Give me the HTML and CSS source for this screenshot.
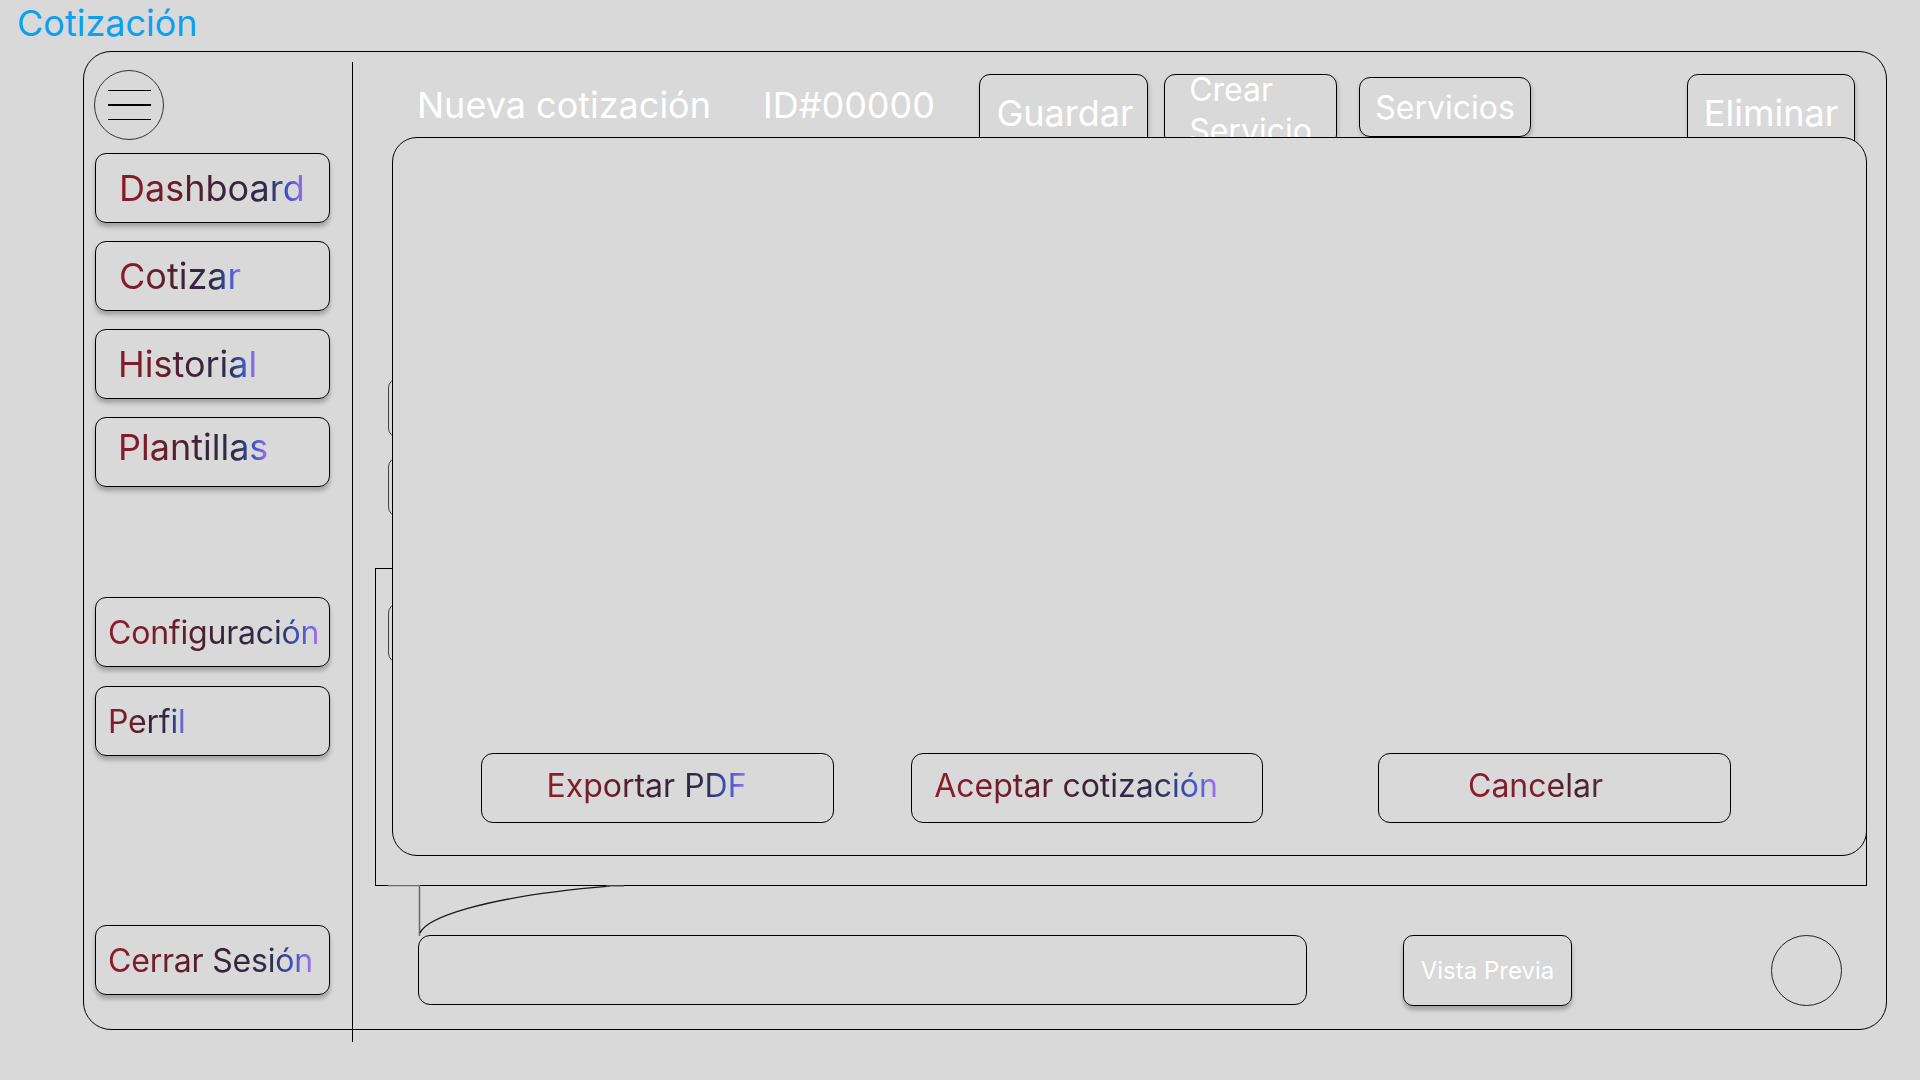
FILE: index.html
```html
<!DOCTYPE html>
<html lang="es">
<head>
<meta charset="utf-8">
<title>Cotización</title>
<link rel="stylesheet" href="styles.css">
</head>
<body>
<h1 class="page-title">Cotización</h1>
<div class="frame">
  <aside class="sidebar">
    <div class="menu-btn"><span></span><span></span><span></span></div>
    <nav class="nav-main">
      <div class="nav-item"><span class="grad">Dashboard</span></div>
      <div class="nav-item"><span class="grad">Cotizar</span></div>
      <div class="nav-item nav-tight"><span class="grad">Historial</span></div>
      <div class="nav-item nav-tight nav-raised"><span class="grad">Plantillas</span></div>
    </nav>
    <nav class="nav-secondary">
      <div class="nav-item nav-small"><span class="grad">Configuración</span></div>
      <div class="nav-item nav-small"><span class="grad">Perfil</span></div>
    </nav>
    <div class="nav-item nav-small nav-logout"><span class="grad">Cerrar Sesión</span></div>
  </aside>
  <main class="main">
    <header class="header">
      <span class="head-text title">Nueva cotización</span>
      <span class="head-text quote-id">ID#00000</span>
      <div class="tab tab-guardar">Guardar</div>
      <div class="tab tab-crear"><span class="tab-two">Crear<br>Servicio</span></div>
      <div class="tab tab-servicios">Servicios</div>
      <div class="tab tab-eliminar">Eliminar</div>
    </header>
    <section class="workspace">
      <div class="backdrop"></div>
      <div class="peek peek-1"></div>
      <div class="peek peek-2"></div>
      <div class="peek peek-3"></div>
      <div class="panel">
        <div class="action action-export"><span class="grad">Exportar PDF</span></div>
        <div class="action action-accept"><span class="grad">Aceptar cotización</span></div>
        <div class="action action-cancel"><span class="grad grad-red">Cancelar</span></div>
      </div>
    </section>
    <footer class="bottom-bar">
      <svg class="connector" width="240" height="54" viewBox="0 0 240 54">
        <path d="M0 0.5 H31.5 M31.5 0 V51" stroke="#6a6a6a" stroke-width="1.5" fill="none"/>
        <path d="M32 48 C38 34 90 12 222 1.2" stroke="#1a1a1a" stroke-width="1.3" fill="none"/>
        <path d="M218 1 H236" stroke="#6a6a6a" stroke-width="1.3" fill="none"/>
      </svg>
      <div class="input-box"></div>
      <div class="preview-btn">Vista Previa</div>
      <div class="avatar"></div>
    </footer>
  </main>
</div>
</body>
</html>
```
FILE: styles.css
```css
* { box-sizing: border-box; }

body {
  margin: 0;
  width: 1920px;
  height: 1080px;
  overflow: hidden;
  background: #d9d9d9;
  font-family: Inter, "Noto Sans", sans-serif;
}

.page-title {
  margin: 0;
  height: 45px;
  padding: 1px 0 0 17px;
  font-size: 36px;
  line-height: 44px;
  font-weight: 400;
  color: #0ba0f2;
}

.frame {
  margin: 6px 0 0 83px;
  width: 1804px;
  height: 979px;
  border: 1px solid #000;
  border-radius: 28px;
  display: flex;
  align-items: flex-start;
}

/* Sidebar */
.sidebar {
  flex: none;
  width: 269px;
  height: 980px;
  margin-top: 10px;
  border-right: 1px solid #000;
  padding: 8px 0 0 11px;
  display: flex;
  flex-direction: column;
  align-items: flex-start;
}

.menu-btn {
  width: 70px;
  height: 70px;
  margin-left: -1px;
  border: 1px solid #333;
  border-radius: 50%;
  display: flex;
  flex-direction: column;
  align-items: center;
  justify-content: center;
  gap: 13px;
}
.menu-btn span {
  display: block;
  width: 43px;
  height: 1.5px;
  background: #000;
}

.nav-main {
  margin-top: 13px;
  display: flex;
  flex-direction: column;
  gap: 18px;
}
.nav-secondary {
  margin-top: 110px;
  display: flex;
  flex-direction: column;
  gap: 19px;
}
.nav-logout { margin-top: 169px; }

.nav-item {
  width: 235px;
  height: 70px;
  border: 1px solid #000;
  border-radius: 11px;
  box-shadow: 0 4px 4px rgba(0, 0, 0, 0.25);
  display: flex;
  align-items: center;
  padding-left: 23px;
  font-size: 36px;
}
.nav-tight { padding-left: 22px; }
.nav-raised { padding-bottom: 10px; }
.nav-small {
  padding-left: 12px;
  font-size: 32px;
  letter-spacing: -0.2px;
}

.grad {
  display: inline-block;
  background: linear-gradient(90deg, #8e1b2c 0%, #6a1d2a 30%, #3a2238 55%, #2c2e4e 80%, #3e56c8 91%, #a373f2 100%);
  -webkit-background-clip: text;
  background-clip: text;
  color: transparent;
}
.grad-red {
  background: linear-gradient(90deg, #8e1b2c 0%, #7a1e2c 50%, #4a2030 80%, #5a2a3a 100%);
  -webkit-background-clip: text;
  background-clip: text;
}

/* Main column */
.main {
  flex: 1;
  display: flex;
  flex-direction: column;
}

.header {
  height: 85px;
  display: flex;
  align-items: flex-start;
  padding-left: 64px;
}

.head-text {
  margin-top: 31px;
  font-size: 36px;
  line-height: 44px;
  color: #fff;
  white-space: nowrap;
}
.title { width: 346px; flex: none; }
.quote-id { width: 216px; flex: none; }

.tab {
  flex: none;
  margin-top: 22px;
  height: 78px;
  border: 1px solid #000;
  border-radius: 11px;
  box-shadow: 1px 3px 4px rgba(0, 0, 0, 0.2);
  display: flex;
  align-items: center;
  justify-content: center;
  color: #fff;
  font-size: 36px;
}
.tab-guardar { width: 169px; padding-left: 3px; }
.tab-crear {
  width: 173px;
  height: 72px;
  margin-left: 16px;
  font-size: 32px;
  line-height: 41px;
}
.tab-two { display: inline-block; text-align: left; }
.tab-servicios {
  width: 172px;
  margin-left: 22px;
  margin-top: 25px;
  height: 60px;
  font-size: 32px;
}
.tab-eliminar { width: 168px; margin-left: 156px; }

/* Workspace */
.workspace {
  position: relative;
  margin-left: 39px;
  width: 1475px;
  height: 719px;
}

.backdrop {
  position: absolute;
  left: -17px;
  top: 431px;
  width: 1492px;
  height: 318px;
  border: 1px solid #000;
}

.peek {
  position: absolute;
  left: -4px;
  width: 200px;
  height: 60px;
  border: 1px solid #444;
  border-radius: 10px;
}
.peek-1 { top: 241px; }
.peek-2 { top: 320px; }
.peek-3 { top: 466px; }

.panel {
  position: relative;
  z-index: 1;
  height: 100%;
  border: 1px solid #000;
  border-radius: 25px;
  background: #d9d9d9;
  display: flex;
  align-items: flex-end;
  padding: 0 0 32px 88px;
}

.action {
  flex: none;
  width: 353px;
  height: 70px;
  border: 1px solid #000;
  border-radius: 12px;
  display: flex;
  align-items: center;
  justify-content: center;
  padding: 0 22px 6px 0;
  font-size: 32px;
}
.action-accept { width: 352px; margin-left: 77px; }
.action-cancel { margin-left: 115px; padding-right: 38px; }

/* Bottom bar */
.bottom-bar {
  position: relative;
  margin-top: 79px;
  padding-left: 65px;
  display: flex;
  align-items: flex-start;
}

.connector {
  position: absolute;
  left: 35px;
  top: -50px;
}

.input-box {
  flex: none;
  width: 889px;
  height: 70px;
  border: 1px solid #000;
  border-radius: 12px;
}

.preview-btn {
  flex: none;
  width: 169px;
  height: 71px;
  margin-left: 96px;
  border: 1px solid #000;
  border-radius: 10px;
  box-shadow: 0 4px 4px rgba(0, 0, 0, 0.25);
  display: flex;
  align-items: center;
  justify-content: center;
  color: #fff;
  font-size: 24px;
}

.avatar {
  flex: none;
  width: 71px;
  height: 71px;
  margin-left: 199px;
  border: 1px solid #222;
  border-radius: 50%;
}
```
